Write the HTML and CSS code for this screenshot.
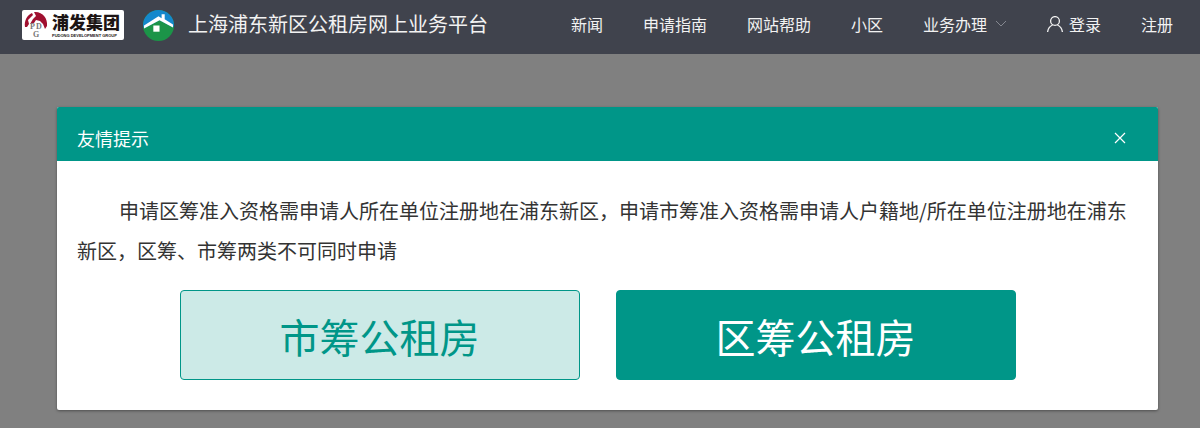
FILE: index.html
```
<!DOCTYPE html>
<html lang="zh-CN">
<head>
    <meta charset="utf-8">
    <meta name="viewport" content="width=device-width, initial-scale=1">
    <title>上海浦东新区公租房网上业务平台</title>
    <link rel="stylesheet" href="styles.css">
</head>

<body>
    <!-- 顶部导航 -->
    <header class="header">
        <a class="group-logo" href="#">
            <svg class="group-mark" viewBox="0 0 24 28" aria-hidden="true">
                <path fill="#a01030" d="M8 2l1 2-5 5 1 4-2 3H1C0 10 3 4 8 2z"/>
                <path fill="#a01030" d="M10 1c8-1 14 6 13 14l-2 3-2-5-3-3-4-1-2 3-4 1 3-5 3-3z"/>
                <g fill="#777" font-family="Liberation Serif, serif" font-weight="bold" font-size="8">
                    <text x="6" y="18">P</text>
                    <text x="12" y="18">D</text>
                    <text x="9" y="26">G</text>
                </g>
            </svg>
            <span class="group-name">
                <span class="group-cn">浦发集团</span>
                <span class="group-en">PUDONG DEVELOPMENT GROUP</span>
            </span>
        </a>
        <a class="brand" href="#">
            <svg class="brand-icon" viewBox="0 0 30 30" aria-hidden="true">
                <circle cx="15" cy="15" r="15" fill="#1b9448"/>
                <path fill="#1488cc" d="M0 15a15 15 0 0 1 30 0l-1 2L16 10 1 18z"/>
                <path fill="#fff" d="M1 15L15 6l3 2V4h3v5l8 5v3L16 10 1 18z"/>
                <path fill="#fff" d="M10 15h6v6h-6z"/>
            </svg>
            <span>上海浦东新区公租房网上业务平台</span>
        </a>
        <nav class="nav">
            <a href="#">新闻</a>
            <a href="#">申请指南</a>
            <a href="#">网站帮助</a>
            <a href="#">小区</a>
            <a href="#">业务办理
                <svg class="arrow" viewBox="0 0 12 8" aria-hidden="true"><path d="M1 1l5 5 5-5"/></svg>
            </a>
            <a href="#">
                <svg class="user" viewBox="0 0 16 16" aria-hidden="true"><circle cx="8" cy="5" r="4.4"/><path d="M.6 16c.4-3.600 2.500-6 5-7M15.400 16c-.4-3.600-2.500-6-5-7"/></svg>登录
            </a>
            <a href="#">注册</a>
        </nav>
    </header>

    <!-- 提示弹窗 -->
    <main class="mask">
        <section class="dialog" role="dialog" aria-labelledby="dialog-title">
            <div class="dialog-head">
                <h1 id="dialog-title">友情提示</h1>
                <button class="close" type="button" aria-label="关闭">
                    <svg viewBox="0 0 12 12" aria-hidden="true"><path d="M1 1l10 10M11 1L1 11"/></svg>
                </button>
            </div>
            <div class="dialog-body">
                <p>申请区筹准入资格需申请人所在单位注册地在浦东新区，申请市筹准入资格需申请人户籍地/所在单位注册地在浦东新区，区筹、市筹两类不可同时申请</p>
                <div class="actions">
                    <button class="btn btn-plain" type="button">市筹公租房</button>
                    <button class="btn" type="button">区筹公租房</button>
                </div>
            </div>
        </section>
    </main>
</body>

</html>
```
FILE: styles.css
```
* {
    box-sizing: border-box;
}

body {
    margin: 0;
    min-height: 100vh;
    display: flex;
    flex-direction: column;
    background-color: #808080;
    font-family: "Noto Sans CJK SC", sans-serif;
    font-size: 16px;
    color: #333;
}

a {
    color: inherit;
    text-decoration: none;
}

.header {
    display: flex;
    align-items: center;
    height: 54px;
    padding: 0 27px 4px 22px;
    background-color: #40434d;
    color: #f2f2f2;
    white-space: nowrap;
}

.group-logo {
    display: flex;
    align-items: center;
    gap: 4px;
    height: 30px;
    padding: 0 4px 0 2px;
    border-radius: 2px;
    background-color: #fff;
    color: #1c1414;
}

.group-mark {
    width: 24px;
    height: 28px;
}

.group-name {
    display: flex;
    flex-direction: column;
    gap: 1px;
}

.group-cn {
    font-size: 17px;
    font-weight: 900;
    line-height: 20px;
}

.group-en {
    font-family: "Liberation Sans", sans-serif;
    font-size: 4px;
    font-weight: bold;
    line-height: 5px;
}

.brand {
    display: flex;
    align-items: center;
    gap: 14px;
    margin-left: 19px;
    font-size: 20px;
    line-height: 30px;
}

.brand span {
    padding-bottom: 2px;
}

.brand-icon {
    width: 31px;
    height: 31px;
}

.nav {
    display: flex;
    gap: 40px;
    margin-left: auto;
    padding-bottom: 2px;
}

.nav a {
    display: flex;
    align-items: center;
}

.nav svg {
    fill: none;
    stroke: currentColor;
}

.nav .arrow {
    width: 12px;
    height: 8px;
    margin-left: 8px;
    stroke: #858890;
}

.user {
    width: 16px;
    height: 16px;
    margin-right: 6px;
    stroke-width: 1.3;
}

.mask {
    flex: 1;
    padding: 53px 42px 18px 57px;
}

.dialog {
    border-radius: 2px;
    background-color: #fff;
    box-shadow: 0 1px 3px rgba(0, 0, 0, .4);
}

.dialog-head {
    display: flex;
    align-items: center;
    justify-content: space-between;
    height: 54px;
    padding: 8px 30px 0 20px;
    border-radius: 2px 2px 0 0;
    background-color: #009688;
    color: #fff;
}

.dialog-head h1 {
    margin: 0;
    font-size: 18px;
    font-weight: normal;
}

.close {
    display: flex;
    padding: 2px;
    border: 0;
    background: none;
    color: #fff;
    cursor: pointer;
}

.close svg {
    width: 12px;
    height: 12px;
    fill: none;
    stroke: currentColor;
    stroke-width: 1.2;
}

.dialog-body {
    padding: 30px 20px;
}

.dialog-body p {
    margin: 0;
    font-size: 20px;
    line-height: 40px;
    text-indent: 42px;
}

.actions {
    display: flex;
    justify-content: center;
    gap: 36px;
    padding-right: 20px;
    margin-top: 19px;
}

.btn {
    width: 400px;
    height: 90px;
    padding: 2px 0 0;
    border: 1px solid #009688;
    border-radius: 4px;
    background-color: #009688;
    color: #fff;
    font-family: inherit;
    font-size: 40px;
    cursor: pointer;
}

.btn-plain {
    background-color: #cceae7;
    color: #009688;
}
```
